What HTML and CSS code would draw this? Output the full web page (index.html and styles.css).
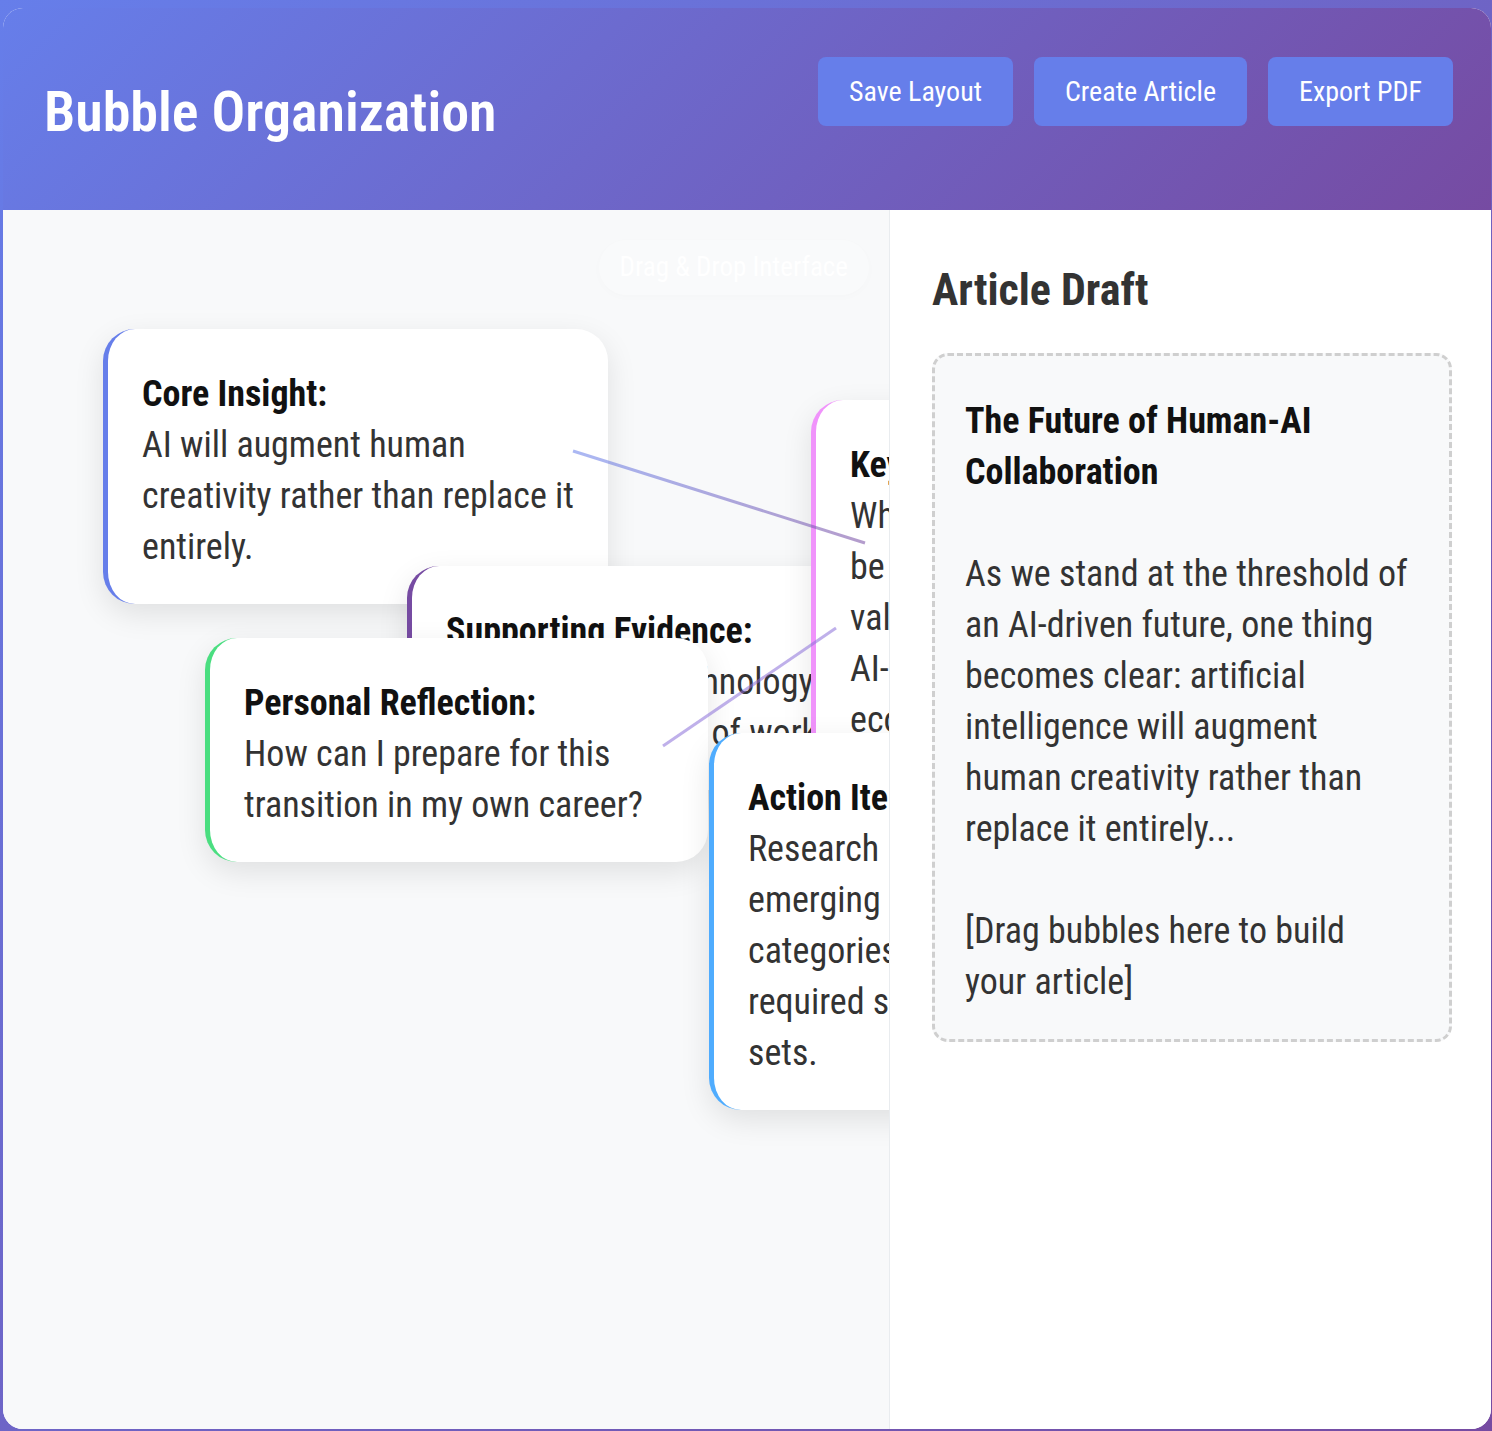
FILE: index.html
```html
<!DOCTYPE html>
<html lang="en">
<head>
<meta charset="utf-8">
<title>Bubble Organization</title>
<link rel="stylesheet" href="styles.css">
</head>
<body>
<div class="app">
  <header class="header">
    <h1 class="title">Bubble Organization</h1>
    <div class="actions">
      <button class="btn">Save Layout</button>
      <button class="btn">Create Article</button>
      <button class="btn">Export PDF</button>
    </div>
  </header>
  <main class="workspace">
    <section class="canvas">
      <div class="bubble bubble-core">
        <div class="bubble-head">Core Insight:</div>
        AI will augment human creativity rather than replace it entirely.
      </div>
      <div class="bubble bubble-evidence">
        <div class="bubble-head">Supporting Evidence:</div>
        Prior waves of technology created new kinds of work.
      </div>
      <div class="bubble bubble-key">
        <div class="bubble-head">Key Question:</div>
        What skills will be most valuable in an <span class="nowrap">AI-driven</span> economy?
      </div>
      <div class="bubble bubble-reflection">
        <div class="bubble-head">Personal Reflection:</div>
        How can I prepare for this transition in my own career?
      </div>
      <div class="bubble bubble-action">
        <div class="bubble-head">Action Items:</div>
        Research emerging role categories and required skill sets.
      </div>
      <svg class="links" width="886" height="1219" viewBox="0 0 886 1219">
        <defs>
          <linearGradient id="linkGrad" x1="0" y1="0" x2="1" y2="0">
            <stop offset="0" stop-color="#667eea"/>
            <stop offset="1" stop-color="#764ba2"/>
          </linearGradient>
        </defs>
        <line x1="570" y1="241" x2="862" y2="333" stroke="url(#linkGrad)" stroke-width="3" stroke-opacity="0.55"/>
        <line x1="660" y1="536" x2="833" y2="418" stroke="#8a70d8" stroke-width="3" stroke-opacity="0.55"/>
      </svg>
      <div class="canvas-label">Drag &amp; Drop Interface</div>
    </section>
    <aside class="panel">
      <h2 class="panel-title">Article Draft</h2>
      <div class="draft">
        <strong>The Future of Human-AI Collaboration</strong><br><br>
        As we stand at the threshold of an <span class="nowrap">AI-driven</span> future, one thing becomes clear: artificial intelligence will augment human creativity rather than replace it entirely...<br><br>
        [Drag bubbles here to build your article]
      </div>
    </aside>
  </main>
</div>
</body>
</html>
```
FILE: styles.css
```css
html {
  background: linear-gradient(135deg, #667eea 0%, #764ba2 100%);
  min-height: 100%;
}

body {
  margin: 0;
  padding: 8px 1px 0 3px;
  font-family: "Roboto Condensed", "Roboto", sans-serif;
  font-stretch: condensed;
  color: #333;
}

.app {
  width: 1488px;
  height: 1421px;
  border-radius: 20px;
  overflow: hidden;
  background: #fff;
  display: flex;
  flex-direction: column;
}

.header {
  flex: none;
  height: 202px;
  box-sizing: border-box;
  padding: 49px 38px 0 41px;
  display: flex;
  justify-content: space-between;
  align-items: flex-start;
  background: linear-gradient(135deg, #667eea 0%, #764ba2 100%);
  color: #fff;
}

.title {
  margin: 22px 0 0;
  font-size: 56px;
  line-height: 67px;
  font-weight: 600;
}

.actions {
  display: flex;
  gap: 21px;
}

.btn {
  height: 69px;
  padding: 0 31px;
  border: none;
  border-radius: 8px;
  background: #667eea;
  color: #fff;
  font-family: "Roboto Condensed", "Roboto", sans-serif;
  font-stretch: condensed;
  font-size: 28px;
  font-weight: 400;
  cursor: pointer;
}

.workspace {
  flex: 1;
  display: flex;
  min-height: 0;
}

.canvas {
  flex: 1;
  position: relative;
  overflow: hidden;
  background: #f8f9fa;
}

.canvas-label {
  position: absolute;
  top: 30px;
  right: 20px;
  padding: 12px 21px;
  border-radius: 28px;
  background: rgba(255, 255, 255, 0.2);
  box-shadow: 0 2px 10px rgba(0, 0, 0, 0.015);
  color: #fff;
  font-size: 27px;
  line-height: 31px;
}

.links {
  position: absolute;
  left: 0;
  top: 0;
  pointer-events: none;
}

.bubble {
  position: absolute;
  box-sizing: border-box;
  padding: 40px 24px 31px 34px;
  border-left: 5px solid #667eea;
  border-radius: 32px;
  background: #fff;
  box-shadow: 0 10px 30px rgba(0, 0, 0, 0.1);
  font-size: 36px;
  line-height: 51px;
  color: #333;
}

.bubble-head {
  font-weight: 700;
  color: #111;
}

.nowrap {
  white-space: nowrap;
}

.bubble-core {
  left: 100px;
  top: 119px;
  width: 505px;
  border-left-color: #667eea;
}

.bubble-evidence {
  left: 404px;
  top: 356px;
  width: 463px;
  border-left-color: #764ba2;
}

.bubble-key {
  left: 808px;
  top: 190px;
  width: 288px;
  border-left-color: #f093fb;
}

.bubble-reflection {
  left: 202px;
  top: 428px;
  width: 503px;
  border-left-color: #4ade80;
}

.bubble-action {
  left: 706px;
  top: 523px;
  width: 293px;
  border-left-color: #4facfe;
}

.panel {
  flex: none;
  width: 602px;
  box-sizing: border-box;
  border-left: 1px solid #e9ecef;
  background: #fff;
  padding: 55px 39px 0 42px;
}

.panel-title {
  margin: 0 0 38px;
  font-size: 44px;
  line-height: 50px;
  font-weight: 700;
  color: #333;
}

.draft {
  border: 3px dashed #cfcfcf;
  border-radius: 16px;
  background: #f8f9fa;
  padding: 40px 39px 31px 30px;
  font-size: 36px;
  line-height: 51px;
  color: #333;
}

.draft strong {
  color: #111;
}
```
